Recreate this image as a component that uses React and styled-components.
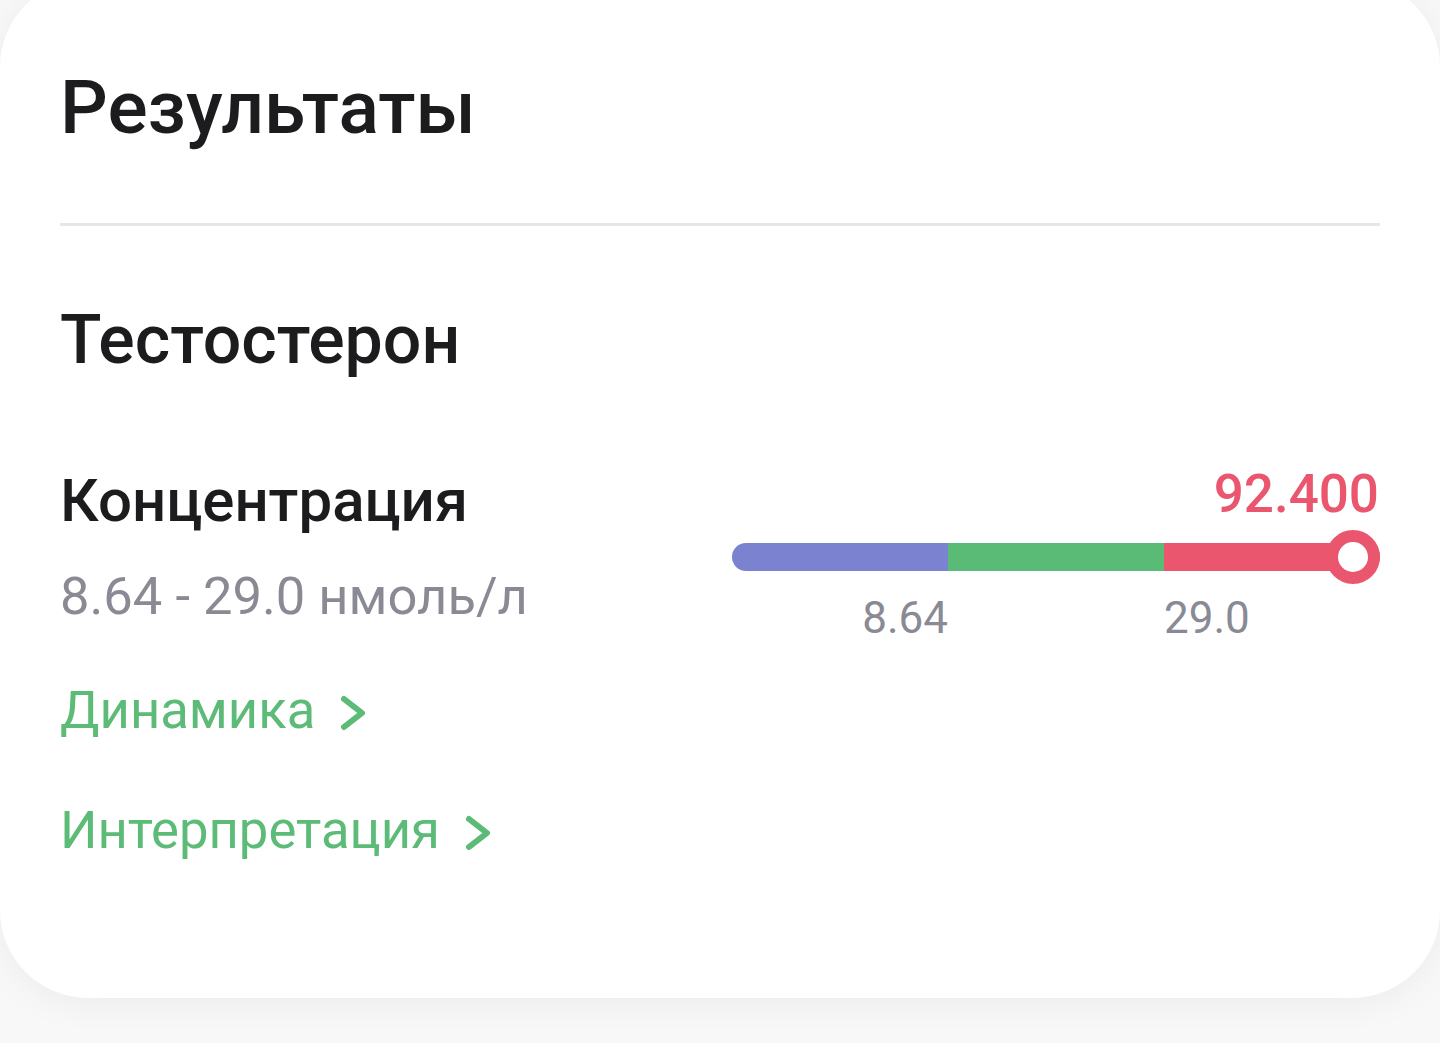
import React from "react";
import styled, { createGlobalStyle } from "styled-components";

const GlobalStyle = createGlobalStyle`
  html, body {
    margin: 0;
    padding: 0;
    background: #f8f8f8;
    font-family: Roboto, "Noto Sans", "Liberation Sans", sans-serif;
    -webkit-font-smoothing: antialiased;
  }
  #root { overflow: hidden; min-height: 1043px; }
`;

const Card = styled.section`
  margin-top: -21px;
  background: #ffffff;
  border-radius: 88px;
  box-shadow: 0 6px 36px rgba(0, 0, 0, 0.05);
  padding: 83px 60px 138px 60px;
`;

const Title = styled.h1`
  margin: 0;
  font-size: 75px;
  line-height: 90px;
  font-weight: 500;
  color: #1c1c1e;
`;

const Divider = styled.hr`
  margin: 71px 0 0 0;
  border: none;
  height: 3px;
  background: #e6e6e8;
`;

const Analyte = styled.h2`
  margin: 74px 0 0 0;
  font-size: 68px;
  line-height: 80px;
  font-weight: 500;
  color: #1c1c1e;
`;

const Row = styled.div`
  margin-top: 86px;
  display: flex;
  justify-content: space-between;
  align-items: flex-start;
`;

const Info = styled.div`
  display: flex;
  flex-direction: column;
`;

const Label = styled.div`
  font-size: 60px;
  line-height: 70px;
  font-weight: 500;
  color: #1c1c1e;
`;

const Range = styled.div`
  margin-top: 30px;
  font-size: 52.5px;
  line-height: 60px;
  font-weight: 400;
  color: #8a8a95;
`;

const Link = styled.a`
  margin-top: ${(p) => p.$gap}px;
  display: inline-flex;
  align-items: center;
  gap: 25px;
  font-size: 52.6px;
  line-height: 60px;
  font-weight: 400;
  color: #5bbb77;
  text-decoration: none;
  cursor: pointer;
`;

const Chevron = styled.svg`
  width: 26px;
  height: 36px;
  margin-top: 6px;
  flex: none;
`;

const Scale = styled.div`
  width: 648px;
  display: flex;
  flex-direction: column;
`;

const Value = styled.div`
  align-self: flex-end;
  font-size: 53px;
  line-height: 56px;
  font-weight: 500;
  color: #e9566d;
  margin-right: 1px;
`;

const Track = styled.div`
  position: relative;
  margin-top: 21px;
  height: 28px;
  display: grid;
  grid-template-columns: repeat(3, 1fr);
`;

const Segment = styled.div`
  background: ${(p) => p.$color};
  border-radius: ${(p) => (p.$first ? "14px 0 0 14px" : p.$last ? "0 14px 14px 0" : "0")};
`;

const Thumb = styled.div`
  position: absolute;
  top: 50%;
  right: 0;
  width: 54px;
  height: 54px;
  box-sizing: border-box;
  border-radius: 50%;
  border: 12px solid #e9566d;
  background: #ffffff;
  transform: translateY(-50%);
`;

const Ticks = styled.div`
  margin-top: 22px;
  display: grid;
  grid-template-columns: repeat(3, 1fr);
  font-size: 44px;
  line-height: 50px;
  color: #8a8a95;
`;

const Tick = styled.span`
  text-align: ${(p) => p.$align};
`;

function ChevronIcon() {
  return (
    <Chevron viewBox="0 0 26 36" fill="none">
      <polyline
        points="4,4 22,18 4,32"
        stroke="#5bbb77"
        strokeWidth="6"
        strokeLinecap="round"
        strokeLinejoin="round"
      />
    </Chevron>
  );
}

export default function App() {
  const zones = ["#7b83d1", "#5abb77", "#e9566d"];
  return (
    <>
      <GlobalStyle />
      <Card>
        <Title>Результаты</Title>
        <Divider />
        <Analyte>Тестостерон</Analyte>
        <Row>
          <Info>
            <Label>Концентрация</Label>
            <Range>8.64 - 29.0 нмоль/л</Range>
            <Link $gap={54}>
              Динамика
              <ChevronIcon />
            </Link>
            <Link $gap={60}>
              Интерпретация
              <ChevronIcon />
            </Link>
          </Info>
          <Scale>
            <Value>92.400</Value>
            <Track>
              {zones.map((c, i) => (
                <Segment key={c} $color={c} $first={i === 0} $last={i === zones.length - 1} />
              ))}
              <Thumb />
            </Track>
            <Ticks>
              <Tick $align="right">8.64</Tick>
              <span />
              <Tick $align="left">29.0</Tick>
            </Ticks>
          </Scale>
        </Row>
      </Card>
    </>
  );
}
